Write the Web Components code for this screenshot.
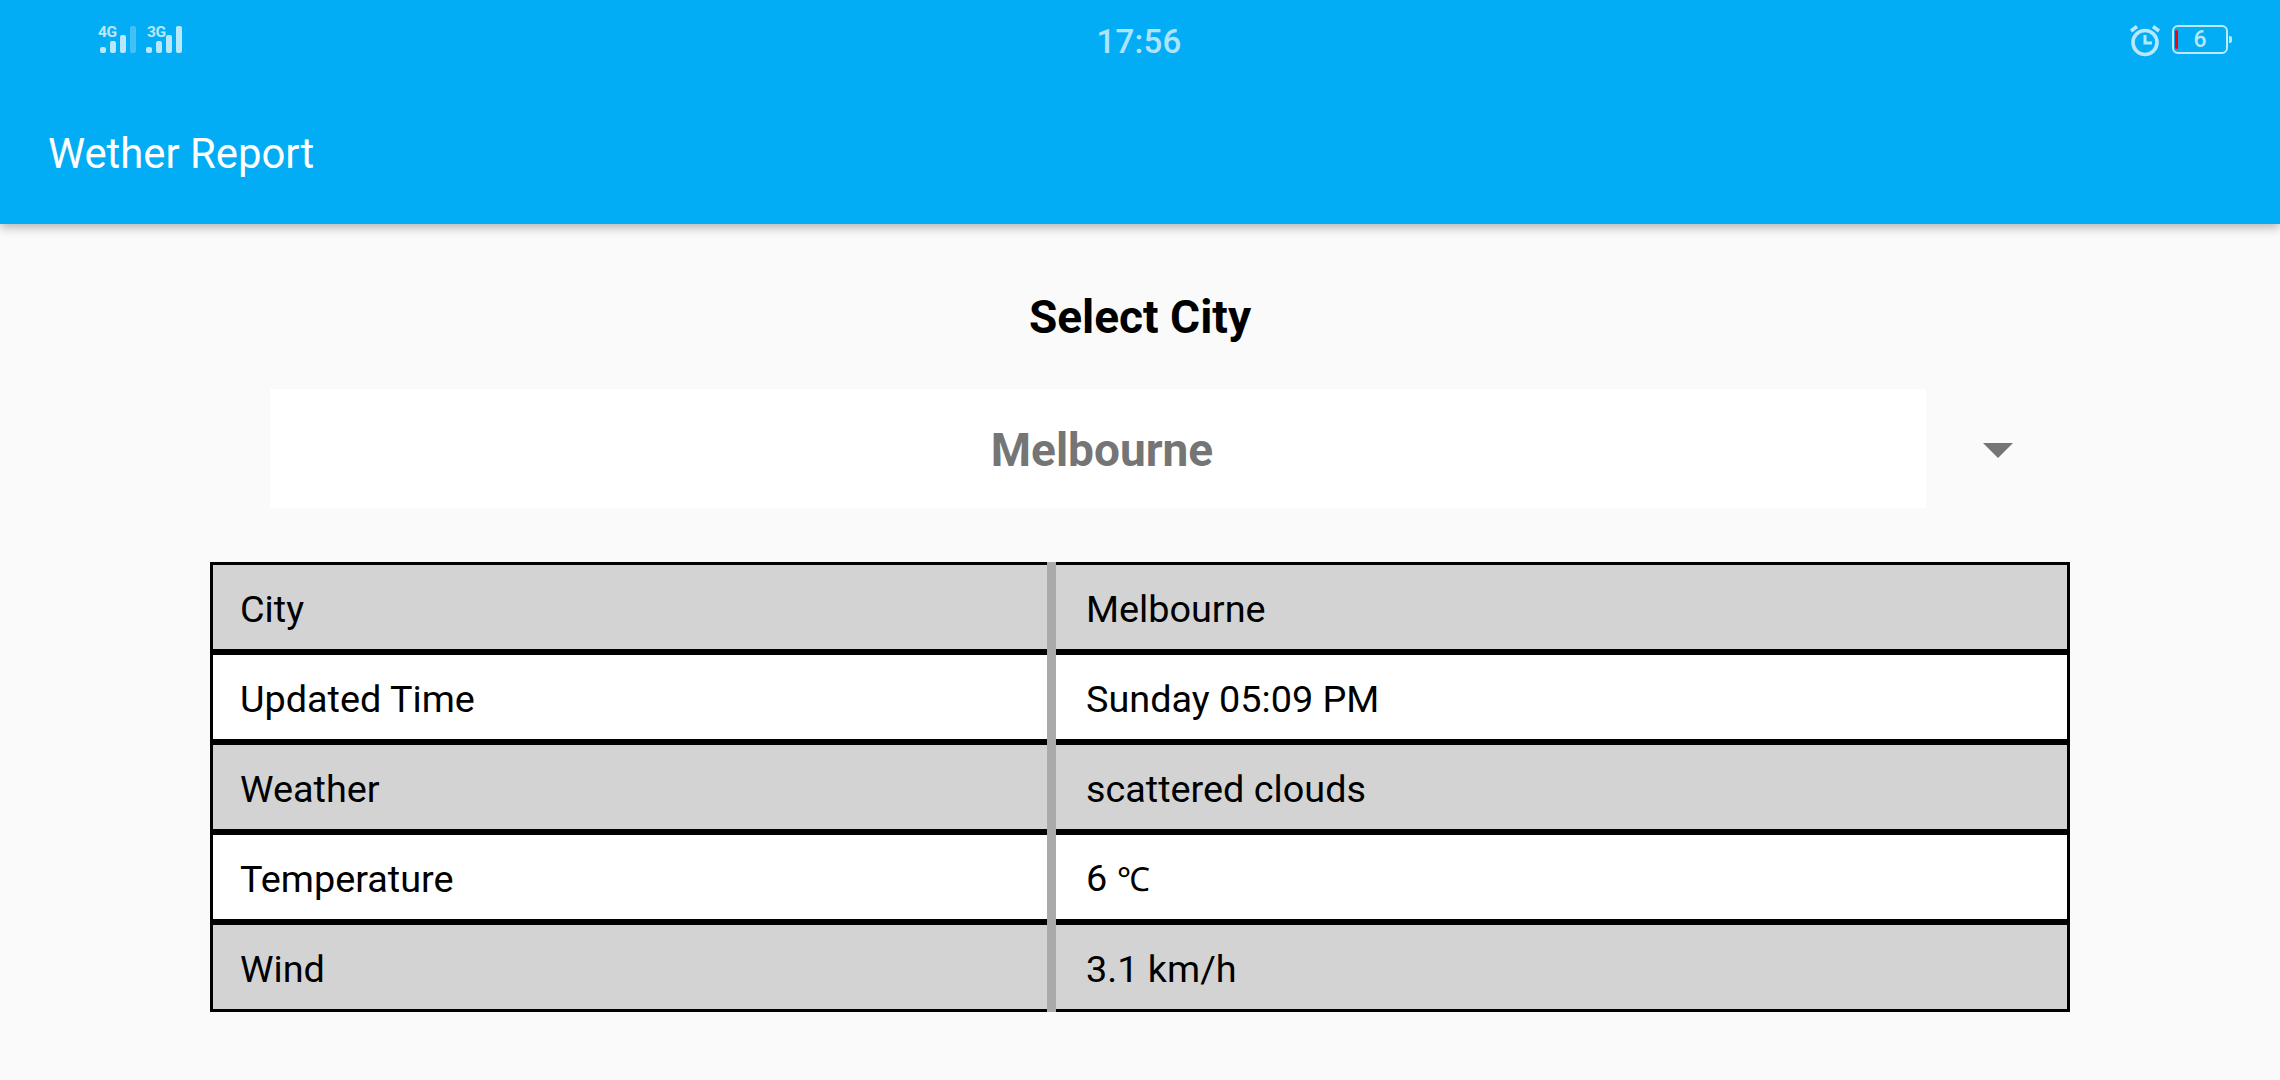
<!DOCTYPE html>
<html>
<head>
<meta charset="utf-8">
<title>Wether Report</title>
<style>
  html, body { margin: 0; padding: 0; background: #fafafa; }
  body { font-family: Roboto, "Liberation Sans", sans-serif; height: 1080px; overflow: hidden; }
</style>
</head>
<body>
<app-header title-text="Wether Report"></app-header>
<city-select label="Select City" value="Melbourne"></city-select>
<weather-table>
  <weather-row label="City" value="Melbourne" shaded></weather-row>
  <weather-row label="Updated Time" value="Sunday 05:09 PM"></weather-row>
  <weather-row label="Weather" value="scattered clouds" shaded></weather-row>
  <weather-row label="Temperature" value="6 " unit="℃"></weather-row>
  <weather-row label="Wind" value="3.1 km/h" shaded></weather-row>
</weather-table>

<script>
class StatusBar extends HTMLElement {
  constructor() {
    super();
    this.shadowDom = this.attachShadow({mode:"open"});
  }

  connectedCallback() {
    this.shadowDom.innerHTML = `
    <style>
      :host {
        display: grid;
        grid-template-columns: 1fr auto 1fr;
        align-items: start;
        height: 84px;
        color: #fff;
      }
      .left { display: flex; padding: 26px 0 0 98px; gap: 8px; opacity: .72; }
      .net { position: relative; width: 38px; height: 27px; }
      .net span {
        position: absolute;
        left: 0;
        top: -1px;
        font-size: 15.5px;
        line-height: 15px;
        font-weight: 700;
        letter-spacing: -.3px;
      }
      .net + .net span { left: 3px; }
      .net svg { display: block; position: absolute; left: 2px; top: 0; }
      .time { padding: 25px 2px 0 0; font-size: 33px; line-height: 34px; font-weight: 500; letter-spacing: .3px; opacity: .68; }
      .right { display: flex; justify-content: flex-end; padding: 23px 52px 0 0; gap: 11px; }
      .alarm { opacity: .72; display: block; }
      .battery {
        position: relative;
        box-sizing: border-box;
        width: 56px;
        height: 29px;
        margin-top: 2px;
        border: 2px solid rgba(255,255,255,.75);
        border-radius: 6px;
        text-align: center;
        font-size: 23px;
        line-height: 25px;
        font-weight: 500;
        color: rgba(255,255,255,.72);
      }
      .battery::before {
        content: "";
        position: absolute;
        left: 1px;
        top: 3px;
        width: 3px;
        height: 19px;
        background: #f00;
        border-radius: 2px;
      }
      .battery::after {
        content: "";
        position: absolute;
        right: -6px;
        top: 9px;
        width: 3px;
        height: 7px;
        background: rgba(255,255,255,.72);
        border-radius: 0 2px 2px 0;
      }
    </style>
    <div class="left">
      <div class="net"><span>4G</span>
        <svg width="38" height="27" viewBox="0 0 38 27" fill="#fff">
          <rect x="0" y="21" width="6" height="6" rx="2"/>
          <rect x="10" y="15" width="6" height="12" rx="2"/>
          <rect x="20" y="9" width="6" height="18" rx="2"/>
          <rect x="30" y="0" width="6" height="27" rx="2" opacity=".35"/>
        </svg>
      </div>
      <div class="net"><span>3G</span>
        <svg width="38" height="27" viewBox="0 0 38 27" fill="#fff">
          <rect x="0" y="21" width="6" height="6" rx="2"/>
          <rect x="10" y="15" width="6" height="12" rx="2"/>
          <rect x="20" y="9" width="6" height="18" rx="2"/>
          <rect x="30" y="0" width="6" height="27" rx="2"/>
        </svg>
      </div>
    </div>
    <div class="time"><slot></slot></div>
    <div class="right">
      <svg class="alarm" width="32" height="34" viewBox="0 0 32 34" fill="none" stroke="#fff">
        <circle cx="16" cy="19.5" r="12" stroke-width="3.6"/>
        <path d="M16 12v8h7" stroke-width="3"/>
        <path d="M2 8 8 3.5M30 8 24 3.5" stroke-width="3.6"/>
      </svg>
      <div class="battery">6</div>
    </div>
    `;
  }
}

class AppHeader extends HTMLElement {
  constructor() {
    super();
    this.shadowDom = this.attachShadow({mode:"open"});
  }

  connectedCallback() {
    this.shadowDom.innerHTML = `
    <style>
      :host {
        display: block;
        height: 224px;
        background-color: #02adf6;
        box-shadow: 0 3px 10px rgba(0,0,0,.3);
        position: relative;
      }
      h1 {
        margin: 0;
        padding: 0 0 2px 48px;
        height: 140px;
        display: flex;
        align-items: center;
        font-size: 41.8px;
        font-weight: 400;
        color: #fff;
        box-sizing: border-box;
      }
    </style>
    <status-bar>17:56</status-bar>
    <h1>${this.getAttribute('title-text')}</h1>
    `;
  }
}

class CitySelect extends HTMLElement {
  constructor() {
    super();
    this.shadowDom = this.attachShadow({mode:"open"});
  }

  connectedCallback() {
    this.shadowDom.innerHTML = `
    <style>
      :host {
        display: block;
        padding-top: 66px;
      }
      .label {
        text-align: center;
        font-size: 46px;
        line-height: 54px;
        font-weight: 700;
        color: #000;
      }
      .row {
        display: grid;
        grid-template-columns: 1656px 87px;
        margin: 45px 0 0 270px;
        height: 119px;
        align-items: center;
      }
      .value {
        background: #fff;
        height: 100%;
        display: flex;
        align-items: center;
        justify-content: center;
        padding: 2px 0 0 8px;
        box-sizing: border-box;
        font-size: 46px;
        font-weight: 700;
        color: #757575;
      }
      .arrow {
        justify-self: end;
        margin-top: 3px;
        width: 0;
        height: 0;
        border-left: 15px solid transparent;
        border-right: 15px solid transparent;
        border-top: 15px solid #757575;
      }
    </style>
    <div class="label">${this.getAttribute('label')}</div>
    <div class="row">
      <div class="value">${this.getAttribute('value')}</div>
      <div class="arrow"></div>
    </div>
    `;
  }
}

class WeatherTable extends HTMLElement {
  constructor() {
    super();
    this.shadowDom = this.attachShadow({mode:"open"});
  }

  connectedCallback() {
    this.shadowDom.innerHTML = `
    <style>
      :host {
        display: block;
        position: relative;
        box-sizing: border-box;
        width: 1860px;
        margin: 54px 0 0 210px;
        border: 3px solid #000;
        background: #000;
      }
      .rows { display: grid; grid-auto-rows: 84px; gap: 6px; }
      /* divider runs over the black lines */
      .divider {
        position: absolute;
        left: 834px;
        top: -3px;
        bottom: -3px;
        width: 9px;
        background: #aaa;
      }
    </style>
    <div class="rows"><slot></slot></div>
    <div class="divider"></div>
    `;
  }
}

class WeatherRow extends HTMLElement {
  constructor() {
    super();
    this.shadowDom = this.attachShadow({mode:"open"});
  }

  connectedCallback() {
    const unit = this.getAttribute('unit');
    this.shadowDom.innerHTML = `
    <style>
      :host {
        display: grid;
        grid-template-columns: 843px 1fr;
        align-items: center;
        background: #fff;
        font-size: 37.8px;
        color: #000;
      }
      :host([shaded]) { background: #d3d3d3; }
      .label, .value { padding-top: 3px; }
      .label { padding-left: 27px; }
      .value { padding-left: 30px; }
      .unit { font-size: 33px; }
    </style>
    <div class="label">${this.getAttribute('label')}</div>
    <div class="value">${this.getAttribute('value')}${unit ? `<span class="unit">${unit}</span>` : ''}</div>
    `;
  }
}

customElements.define("status-bar", StatusBar);
customElements.define("app-header", AppHeader);
customElements.define("city-select", CitySelect);
customElements.define("weather-table", WeatherTable);
customElements.define("weather-row", WeatherRow);
</script>
</body>
</html>
